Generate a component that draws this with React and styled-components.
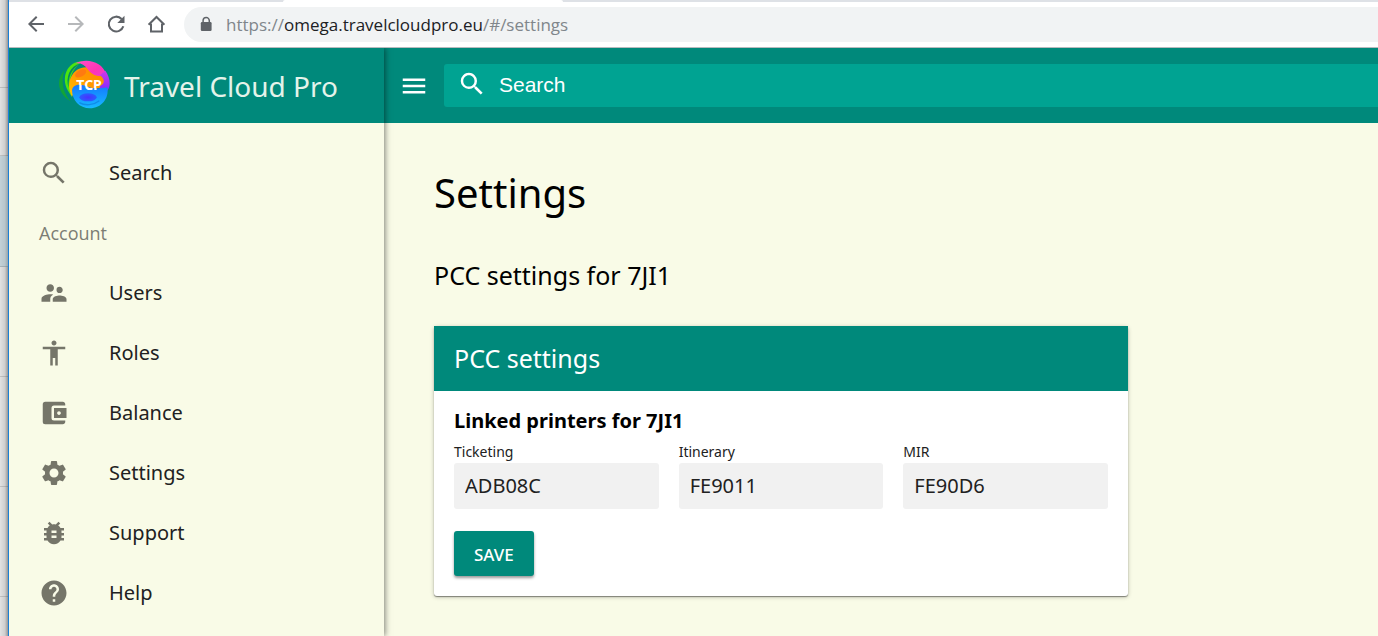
import React from 'react';
import styled, { createGlobalStyle } from 'styled-components';
import {
  MdSearch, MdSupervisorAccount, MdAccessibility, MdAccountBalanceWallet,
  MdSettings, MdBugReport, MdHelp, MdMenu, MdArrowBack, MdArrowForward,
} from 'react-icons/md';

const teal = '#00897b';
const cream = '#f9fbe7';

const GlobalStyle = createGlobalStyle`
  *, *::before, *::after { box-sizing: border-box; }
  body {
    margin: 0;
    background: ${cream};
    color: #000;
    font-family: 'Noto Sans', sans-serif;
    font-size: 20px;
    overflow: hidden;
  }
  h1, h2, h3, p, ul { margin: 0; padding: 0; }
  button, input { font: inherit; border: 0; margin: 0; }
`;

const Desktop = styled.div`
  display: flex;
  height: 100vh;
`;

const BehindWindow = styled.div`
  flex: 0 0 9px;
  display: flex;
  flex-direction: column;
  border-right: 1px solid #1a7fd6;
  background: linear-gradient(to right, #e2e2e2, #cfcfcf 60%, #979797);
`;

const BehindRow = styled.div`
  flex: 0 0 ${(p) => p.$height}px;
  border-bottom: 1px solid rgba(0, 0, 0, 0.14);
  background: ${(p) => (p.$selected ? 'rgba(150, 185, 200, 0.4)' : 'transparent')};
`;

const Browser = styled.div`
  flex: 1;
  min-width: 0;
  display: flex;
  flex-direction: column;
`;

const TabStrip = styled.div`
  flex: 0 0 2px;
  display: flex;
  background: #dee1e6;
`;

const ActiveTab = styled.div`
  width: 280px;
  margin-left: 274px;
  background: #fff;
  border-radius: 4px 4px 0 0;
`;

const Toolbar = styled.div`
  flex: 0 0 46px;
  display: flex;
  align-items: center;
  gap: 16px;
  padding: 0 0 1px 15px;
  background: #fff;
  border-bottom: 1px solid #b9bbbe;
`;

const ToolButton = styled.button`
  display: flex;
  width: 24px;
  height: 24px;
  padding: 0;
  background: none;
  color: #5f6368;
  opacity: ${(p) => (p.disabled ? 0.45 : 1)};
`;

const AddressBar = styled.div`
  flex: 1;
  display: flex;
  align-items: center;
  gap: 12px;
  height: 35px;
  padding-left: 14px;
  border-radius: 18px 0 0 18px;
  background: #f1f3f4;
  color: #5f6368;
`;

const Url = styled.span`
  font-family: 'Open Sans', sans-serif;
  font-size: 17px;
  color: #80868b;
  white-space: nowrap;
`;

const Host = styled.span`
  color: #202124;
`;

const AppShell = styled.div`
  flex: 1;
  min-height: 0;
  display: flex;
  overflow: hidden;
`;

const Drawer = styled.aside`
  flex: 0 0 375px;
  position: relative;
  background: ${cream};
  box-shadow: 1px 0 6px rgba(0, 0, 0, 0.5);
`;

const Brand = styled.div`
  display: flex;
  align-items: center;
  gap: 14px;
  height: 75px;
  padding-left: 49px;
  background: ${teal};
  color: #e4f3ea;
  font-size: 28px;
  white-space: nowrap;
`;

const Nav = styled.nav`
  padding-top: 20px;
`;

const NavList = styled.ul`
  list-style: none;
`;

const NavLink = styled.a`
  display: flex;
  align-items: center;
  gap: 40px;
  height: 60px;
  padding-left: 30px;
  color: #212121;
  line-height: 26px;
  text-decoration: none;

  svg { color: #757569; }
`;

const NavHeading = styled.h3`
  height: 60px;
  padding-left: 30px;
  line-height: 60px;
  font-family: 'Open Sans', sans-serif;
  font-size: 18px;
  font-weight: 400;
  color: #7c7d74;
`;

const Page = styled.div`
  flex: 1;
  min-width: 0;
`;

const TopBar = styled.header`
  display: flex;
  align-items: center;
  gap: 15px;
  height: 75px;
  padding-left: 15px;
  background: ${teal};
  color: #fff;
`;

const MenuButton = styled.button`
  display: flex;
  padding: 0;
  background: none;
  color: inherit;
`;

const SearchField = styled.label`
  flex: 1;
  display: flex;
  align-items: center;
  gap: 12px;
  height: 43px;
  padding: 0 0 2px 13px;
  border-radius: 3px 0 0 3px;
  background: #00a392;

  svg { margin-bottom: 2px; }
`;

const SearchInput = styled.input`
  flex: 1;
  min-width: 0;
  padding: 0;
  background: none;
  outline: 0;
  color: #fff;
  font-family: 'Liberation Sans', sans-serif;
  font-size: 21px;

  &::placeholder { color: #fff; opacity: 1; }
`;

const Content = styled.main`
  padding: 42px 50px 0;
`;

const Title = styled.h1`
  font-size: 40px;
  line-height: 56px;
  font-weight: 400;
`;

const Subtitle = styled.h2`
  margin: 36px 0 33px;
  font-size: 25px;
  line-height: 36px;
  font-weight: 400;
`;

const Card = styled.section`
  max-width: 694px;
  border-radius: 3px;
  background: #fff;
  box-shadow: 0 1px 1px rgba(0, 0, 0, 0.4), 0 1px 4px rgba(0, 0, 0, 0.25);
`;

const CardHeader = styled.h2`
  padding-left: 20px;
  background: ${teal};
  color: #fff;
  font-size: 25px;
  line-height: 65px;
  font-weight: 400;
`;

const CardForm = styled.form`
  padding: 16px 20px 20px;
`;

const GroupTitle = styled.h3`
  font-size: 20px;
  line-height: 28px;
  font-weight: 700;
`;

const Fields = styled.div`
  display: grid;
  grid-template-columns: repeat(3, 1fr);
  gap: 20px;
  padding: 8px 0 22px;
`;

const Field = styled.label`
  display: flex;
  flex-direction: column;
  gap: 2px;
  min-width: 0;
  color: #212121;
  font-size: 14px;
  line-height: 18px;
`;

const TextInput = styled.input`
  width: 100%;
  height: 46px;
  padding: 0 11px 2px;
  border-radius: 3px;
  background: #f1f1f1;
  color: #212121;
  font-size: 20px;
`;

const SaveButton = styled.button`
  display: block;
  height: 45px;
  padding: 1px 20px 0;
  border-radius: 3px;
  background: ${teal};
  color: #fff;
  font-size: 17px;
  font-weight: 500;
  box-shadow: 0 2px 3px rgba(0, 0, 0, 0.4);
`;

const LogoText = styled.text`
  font: 700 42px 'Noto Sans', sans-serif;
  fill: #fff;
`;

function ReloadIcon() {
  return (
    <svg width="24" height="24" viewBox="0 0 24 24" fill="none" aria-hidden="true">
      <path d="M17.6 7A7.4 7.4 0 1 0 19.3 14.2" stroke="currentColor" strokeWidth="2.1" />
      <path d="M20.5 3.8V11H13.3Z" fill="currentColor" />
    </svg>
  );
}

function HomeIcon() {
  return (
    <svg width="24" height="24" viewBox="0 0 24 24" fill="none" stroke="currentColor" strokeWidth="2" aria-hidden="true">
      <path d="M4.6 12.8L12.5 5L20.4 12.8" />
      <path d="M7 11.5V19.6H18V11.5" />
    </svg>
  );
}

function LockIcon() {
  return (
    <svg width="16" height="16" viewBox="0 0 16 16" aria-hidden="true">
      <path d="M5.1 7V4.6a3.1 3.1 0 0 1 6.2 0V7" fill="none" stroke="currentColor" strokeWidth="1.5" />
      <rect x="2.8" y="6" width="10.8" height="9" rx="1.2" fill="currentColor" />
    </svg>
  );
}

function Logo() {
  return (
    <svg width="52" height="52" viewBox="24 28 156 156" aria-hidden="true">
      <defs>
        <linearGradient id="orange" x1="0" y1="1" x2="1" y2="0">
          <stop offset="0" stopColor="#ffc400" />
          <stop offset=".5" stopColor="#ff9800" />
          <stop offset="1" stopColor="#ff8a00" />
        </linearGradient>
        <linearGradient id="pink" x1="0" y1="0" x2="1" y2="1">
          <stop offset="0" stopColor="#ff4fc8" />
          <stop offset=".6" stopColor="#ff35b4" />
          <stop offset="1" stopColor="#e83cd8" />
        </linearGradient>
        <linearGradient id="purple" x1="0" y1="0" x2="0" y2="1">
          <stop offset="0" stopColor="#d238e8" />
          <stop offset="1" stopColor="#7a28ff" />
        </linearGradient>
        <linearGradient id="blue" x1="0" y1="0" x2="0" y2="1">
          <stop offset="0" stopColor="#1477ff" />
          <stop offset="1" stopColor="#17baff" />
        </linearGradient>
        <radialGradient id="indigo">
          <stop offset="0" stopColor="#4a30ff" />
          <stop offset="1" stopColor="#2a5cff" />
        </radialGradient>
      </defs>
      <path d="M44 58C18 84 20 126 62 152C42 128 30 98 44 58Z" fill="#11a437" />
      <path d="M98 32C50 32 32 82 54 120L66 140C54 100 58 58 98 32Z" fill="#4be60f" />
      <path d="M92 38C58 46 46 82 56 112C54 82 62 56 92 38Z" fill="#078a62" />
      <path d="M66 138C44 96 68 50 108 50C146 50 170 76 168 110L74 120Z" fill="url(#orange)" />
      <ellipse cx="92" cy="68" rx="18" ry="10" fill="#ff7a10" transform="rotate(-28 92 68)" />
      <path d="M76 38C110 20 158 34 168 70C170 80 164 80 156 76C136 78 122 68 112 54C104 42 92 36 76 38Z" fill="url(#pink)" />
      <path d="M166 60C182 82 184 112 168 124C156 130 146 120 150 106C164 100 166 86 150 74Z" fill="url(#purple)" />
      <path d="M66 118C70 98 94 100 114 108C134 116 150 114 172 110C178 144 154 173 120 173C88 173 66 148 66 118Z" fill="url(#blue)" />
      <ellipse cx="114" cy="140" rx="26" ry="12" fill="url(#indigo)" />
      <path d="M88 156C106 166 130 164 148 150" fill="none" stroke="#0f8ce8" strokeWidth="4" />
      <LogoText x="79" y="118">TCP</LogoText>
    </svg>
  );
}

const accountLinks = [
  { label: 'Users', Icon: MdSupervisorAccount },
  { label: 'Roles', Icon: MdAccessibility },
  { label: 'Balance', Icon: MdAccountBalanceWallet },
  { label: 'Settings', Icon: MdSettings },
  { label: 'Support', Icon: MdBugReport },
  { label: 'Help', Icon: MdHelp },
];

const printers = [
  { label: 'Ticketing', value: 'ADB08C' },
  { label: 'Itinerary', value: 'FE9011' },
  { label: 'MIR', value: 'FE90D6' },
];

export default function App() {
  return (
    <>
      <GlobalStyle />
      <Desktop>
        <BehindWindow aria-hidden="true">
          <BehindRow $height={88} />
          <BehindRow $height={68} />
          <BehindRow $height={111} $selected />
          <BehindRow $height={110} />
          <BehindRow $height={110} />
          <BehindRow $height={110} />
        </BehindWindow>
        <Browser>
          <TabStrip><ActiveTab /></TabStrip>
          <Toolbar>
            <ToolButton aria-label="Back"><MdArrowBack size={24} /></ToolButton>
            <ToolButton aria-label="Forward" disabled><MdArrowForward size={24} /></ToolButton>
            <ToolButton aria-label="Reload"><ReloadIcon /></ToolButton>
            <ToolButton aria-label="Home"><HomeIcon /></ToolButton>
            <AddressBar>
              <LockIcon />
              <Url>https://<Host>omega.travelcloudpro.eu</Host>/#/settings</Url>
            </AddressBar>
          </Toolbar>
          <AppShell>
            <Drawer>
              <Brand><Logo />Travel Cloud Pro</Brand>
              <Nav>
                <NavLink href="#/search"><MdSearch size={30} />Search</NavLink>
                <NavHeading>Account</NavHeading>
                <NavList>
                  {accountLinks.map(({ label, Icon }) => (
                    <li key={label}>
                      <NavLink href={`#/${label.toLowerCase()}`}><Icon size={30} />{label}</NavLink>
                    </li>
                  ))}
                </NavList>
              </Nav>
            </Drawer>
            <Page>
              <TopBar>
                <MenuButton aria-label="Menu"><MdMenu size={30} /></MenuButton>
                <SearchField>
                  <MdSearch size={30} />
                  <SearchInput type="search" placeholder="Search" aria-label="Search" />
                </SearchField>
              </TopBar>
              <Content>
                <Title>Settings</Title>
                <Subtitle>PCC settings for 7JI1</Subtitle>
                <Card>
                  <CardHeader>PCC settings</CardHeader>
                  <CardForm onSubmit={(e) => e.preventDefault()}>
                    <GroupTitle>Linked printers for 7JI1</GroupTitle>
                    <Fields>
                      {printers.map(({ label, value }) => (
                        <Field key={label}>
                          {label}
                          <TextInput defaultValue={value} />
                        </Field>
                      ))}
                    </Fields>
                    <SaveButton type="submit">SAVE</SaveButton>
                  </CardForm>
                </Card>
              </Content>
            </Page>
          </AppShell>
        </Browser>
      </Desktop>
    </>
  );
}
